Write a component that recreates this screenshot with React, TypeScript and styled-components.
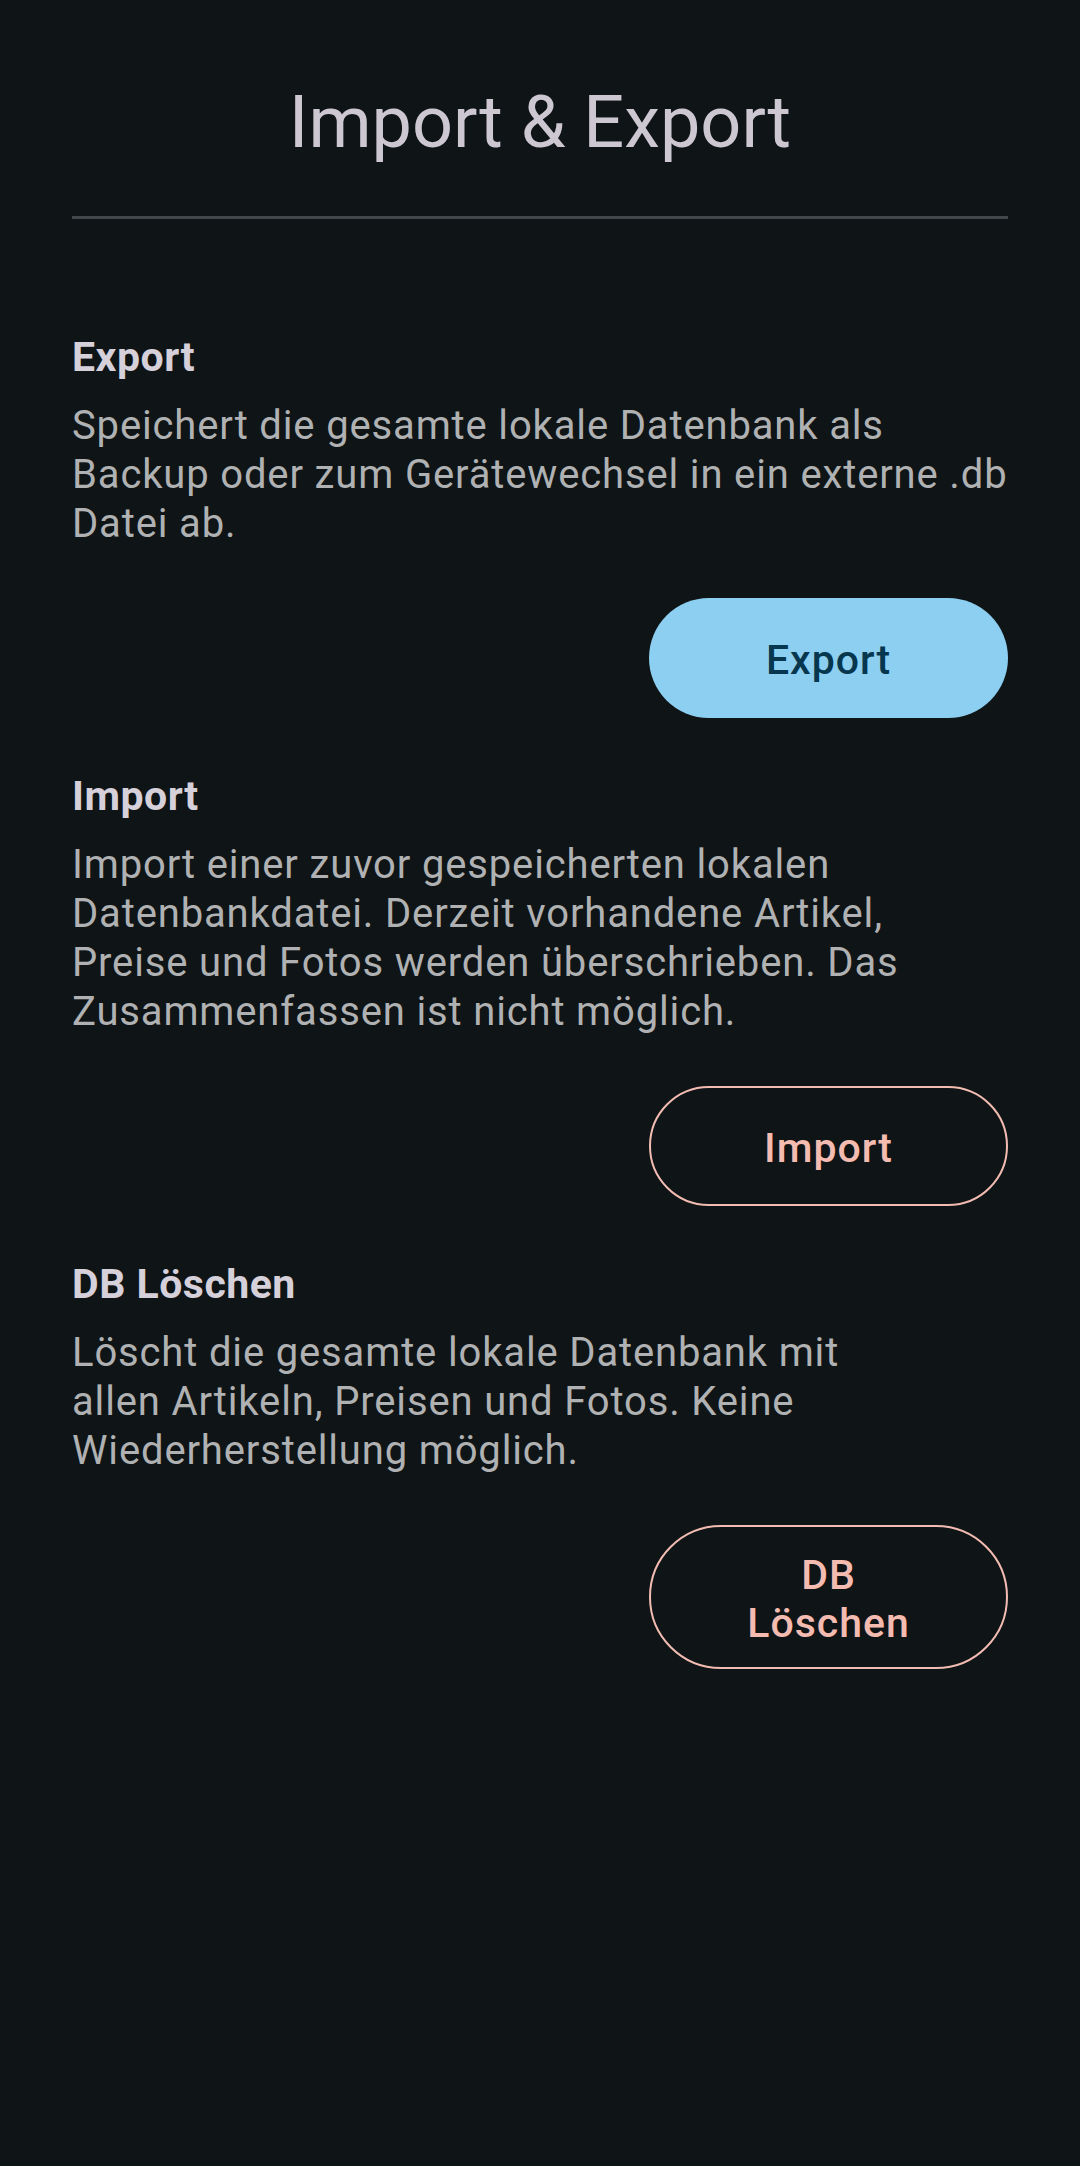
import React from "react";
import styled, { createGlobalStyle } from "styled-components";

const GlobalStyle = createGlobalStyle`
  html, body {
    margin: 0;
    padding: 0;
    background: #0f1416;
  }
  body {
    font-family: Roboto, "Noto Sans", "Liberation Sans", sans-serif;
    -webkit-font-smoothing: antialiased;
  }
`;

const Screen = styled.div`
  min-height: 2166px;
  background: #0f1416;
  padding: 0 72px;
  box-sizing: border-box;
  display: flex;
  flex-direction: column;
`;

const Title = styled.h1`
  margin: 76px 0 0;
  font-size: 72px;
  line-height: 94px;
  font-weight: 400;
  color: #cdc7d1;
  text-align: center;
`;

const Divider = styled.hr`
  margin: 46px 0 0;
  border: none;
  height: 2.6px;
  background: #42474b;
`;

const SectionList = styled.div`
  display: flex;
  flex-direction: column;
  gap: 54px;
  margin-top: 114px;
`;

const Section = styled.section`
  display: flex;
  flex-direction: column;
`;

const Heading = styled.h2`
  margin: 0;
  font-size: 41px;
  line-height: 49px;
  font-weight: 700;
  letter-spacing: 0.5px;
  color: #d5d0da;
`;

const Description = styled.p`
  margin: 19px 0 0;
  font-size: 40px;
  line-height: 49px;
  font-weight: 400;
  letter-spacing: 0.85px;
  white-space: pre-line;
  color: #afb1b2;
`;

const ButtonRow = styled.div`
  display: flex;
  justify-content: flex-end;
  margin-top: 50px;
`;

const ActionButton = styled.button<{ $variant: "filled" | "outlined" }>`
  width: 359px;
  min-height: 120px;
  box-sizing: border-box;
  padding: 24px 84px 20px;
  border-radius: 999px;
  display: flex;
  align-items: center;
  justify-content: center;
  text-align: center;
  font-family: Roboto, "Noto Sans", "Liberation Sans", sans-serif;
  font-size: 41px;
  line-height: 48px;
  font-weight: 500;
  letter-spacing: 1px;
  cursor: pointer;
  background: ${(p) => (p.$variant === "filled" ? "#8dcff1" : "transparent")};
  color: ${(p) => (p.$variant === "filled" ? "#06374e" : "#f4bbb1")};
  border: ${(p) => (p.$variant === "filled" ? "none" : "2.6px solid #f2bcb2")};
`;

interface IAction {
  title: string;
  text: string;
  button: string;
  variant: "filled" | "outlined";
}

const actions: IAction[] = [
  {
    title: "Export",
    text: "Speichert die gesamte lokale Datenbank als Backup oder zum Gerätewechsel in ein externe .db Datei ab.",
    button: "Export",
    variant: "filled",
  },
  {
    title: "Import",
    text: "Import einer zuvor gespeicherten lokalen Datenbankdatei. Derzeit vorhandene Artikel, Preise und Fotos werden überschrieben. Das Zusammenfassen ist nicht möglich.",
    button: "Import",
    variant: "outlined",
  },
  {
    title: "DB Löschen",
    text: "Löscht die gesamte lokale Datenbank mit\nallen Artikeln, Preisen und Fotos. Keine Wiederherstellung möglich.",
    button: "DB Löschen",
    variant: "outlined",
  },
];

const App: React.FC = () => {
  return (
    <>
      <GlobalStyle />
      <Screen>
        <Title>Import &amp; Export</Title>
        <Divider />

        <SectionList>
          {actions.map((item) => (
            <Section key={item.title}>
              <Heading>{item.title}</Heading>
              <Description>{item.text}</Description>
              <ButtonRow>
                <ActionButton $variant={item.variant}>{item.button}</ActionButton>
              </ButtonRow>
            </Section>
          ))}
        </SectionList>
      </Screen>
    </>
  );
};

export default App;
